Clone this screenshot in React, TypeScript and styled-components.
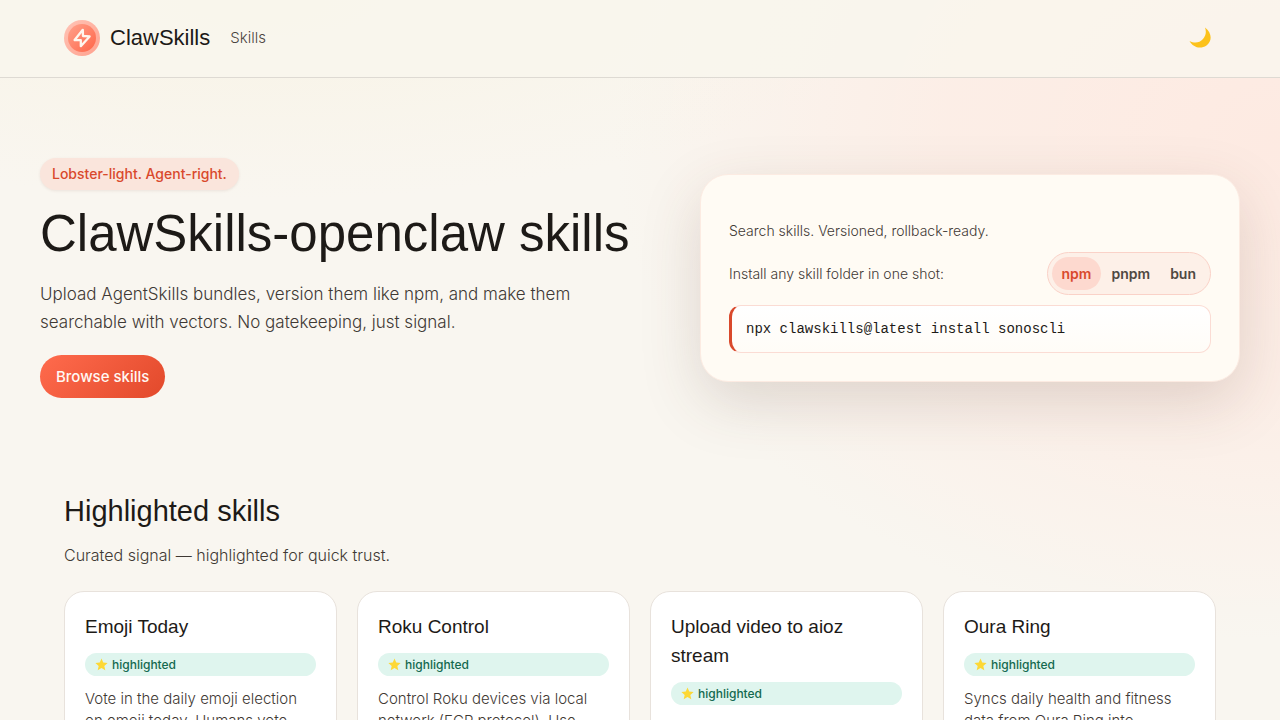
import React, { useState } from "react";
import styled, { createGlobalStyle } from "styled-components";

const display = `"Liberation Sans", sans-serif`;

const GlobalStyle = createGlobalStyle`
  * { box-sizing: border-box; }
  body {
    margin: 0;
    min-height: 100vh;
    color: #1d1a17;
    font-family: Inter, "Liberation Sans", sans-serif;
    font-size: 16px;
    font-weight: 300;
    background:
      radial-gradient(ellipse 50% 200px at 20% 0, rgba(247, 241, 220, 0.5), transparent 100%),
      radial-gradient(ellipse 52% 500px at 100% 140px, rgba(255, 230, 221, 0.75), rgba(255, 230, 221, 0.5) 50%, transparent 100%),
      #f9f6f0;
  }
  h1, h2, h3, p { margin: 0; }
  h1, h2, h3 { font-family: ${display}; font-weight: 400; }
`;

const Header = styled.header`
  border-bottom: 1px solid #dedad3;
  background: rgba(249, 246, 238, 0.8);
`;

const HeaderInner = styled.div`
  max-width: 1200px;
  margin: 0 auto;
  padding: 20px 24px 21px;
  display: flex;
  align-items: center;
  gap: 20px;
`;

const Brand = styled.a`
  display: flex;
  align-items: center;
  gap: 10px;
  color: #1d1a17;
  font-family: ${display};
  font-size: 22px;
  font-weight: 400;
  line-height: 36px;
  text-decoration: none;
`;

const NavLink = styled.a`
  color: #4a443f;
  font-size: 15px;
  line-height: 20px;
  text-decoration: none;
`;

const ThemeButton = styled.button`
  margin-left: auto;
  width: 32px;
  height: 32px;
  padding: 4px;
  border: 0;
  background: none;
  cursor: pointer;
`;

const Hero = styled.section`
  max-width: 1200px;
  margin: 0 auto;
  padding: 80px 0;
  display: grid;
  grid-template-columns: 11fr 9fr;
  align-items: center;
`;

const HeroCopy = styled.div`
  display: flex;
  flex-direction: column;
  align-items: flex-start;
`;

const Badge = styled.span`
  padding: 0 12px;
  border-radius: 16px;
  background: #fae5dc;
  box-shadow: 0 1px 3px rgba(120, 60, 40, 0.1);
  color: #d9492c;
  font-size: 14px;
  font-weight: 500;
  line-height: 32px;
`;

const HeroTitle = styled.h1`
  margin-top: 16px;
  font-size: 51px;
  line-height: 56px;
  white-space: nowrap;
`;

const HeroText = styled.p`
  max-width: 560px;
  margin-top: 18px;
  color: #3f3934;
  font-size: 17px;
  line-height: 28px;
`;

const BrowseLink = styled.a`
  margin-top: 19px;
  padding: 0 16px;
  border-radius: 22px;
  background: linear-gradient(135deg, #ff6b4d, #e2492b);
  color: #fff8f3;
  font-size: 15px;
  font-weight: 500;
  line-height: 43px;
  text-decoration: none;
`;

const InstallCard = styled.div`
  padding: 42px 28px 28px;
  border: 1px solid #fcebe2;
  border-radius: 28px;
  background: #fffbf4;
  box-shadow: 0 20px 60px rgba(90, 60, 45, 0.17);
`;

const InstallText = styled.p`
  color: #3f3934;
  font-size: 14px;
  line-height: 28px;
`;

const InstallRow = styled.div`
  margin: 7px 0 10px;
  display: flex;
  align-items: center;
  justify-content: space-between;
`;

const Switcher = styled.div`
  padding: 4px;
  display: flex;
  border: 1px solid #fad2c8;
  border-radius: 22px;
  background: #fdf0e8;
`;

const SwitchButton = styled.button<{ $active: boolean }>`
  height: 33px;
  padding: 0 10px;
  border: 0;
  border-radius: 17px;
  background: ${(p) => (p.$active ? "#fdd9cf" : "transparent")};
  color: ${(p) => (p.$active ? "#d9492c" : "#4f4842")};
  font: 600 14px Inter, "Liberation Sans", sans-serif;
  cursor: pointer;
`;

const Command = styled.code`
  display: block;
  padding: 0 14px;
  border: 1px solid #fbdcd4;
  border-left: 3px solid #d9492c;
  border-radius: 12px;
  background: linear-gradient(#ffffff, #fffcf7);
  font-family: "Liberation Mono", monospace;
  font-size: 14px;
  font-weight: 400;
  line-height: 46px;
`;

const Section = styled.section`
  max-width: 1200px;
  margin: 0 auto;
  padding: 12px 24px 48px;
`;

const SectionTitle = styled.h2`
  font-size: 29px;
  line-height: 43px;
`;

const SectionText = styled.p`
  margin: 8px 0 22px;
  color: #3f3934;
  font-size: 16px;
  line-height: 28px;
`;

const Grid = styled.div`
  display: grid;
  grid-template-columns: repeat(4, 1fr);
  gap: 20px;
`;

const Card = styled.article`
  padding: 20px;
  border: 1px solid #e8e2dc;
  border-radius: 20px;
  background: #ffffff;
`;

const CardTitle = styled.h3`
  font-size: 19px;
  line-height: 29px;
`;

const Tag = styled.div`
  margin: 12px 0;
  padding: 0 10px;
  display: flex;
  align-items: center;
  gap: 4px;
  border-radius: 12px;
  background: #dff5ee;
  color: #14694f;
  font-size: 12px;
  font-weight: 500;
  line-height: 23px;
`;

const CardText = styled.p`
  color: #3f3934;
  font-size: 15px;
  line-height: 22px;
`;

const Logo = () => (
  <svg width="36" height="36" viewBox="0 0 36 36" aria-hidden="true">
    <defs>
      <linearGradient id="logo" x1="0" y1="0" x2="1" y2="1">
        <stop offset="0" stopColor="#ffa28c" />
        <stop offset="1" stopColor="#ff6548" />
      </linearGradient>
      <linearGradient id="ring" x1="0" y1="0" x2="1" y2="1">
        <stop offset="0" stopColor="#ffc4b6" />
        <stop offset="1" stopColor="#ffa18e" />
      </linearGradient>
    </defs>
    <circle cx="18" cy="18" r="18" fill="url(#ring)" />
    <circle cx="18" cy="18" r="14" fill="url(#logo)" />
    <path d="M18.800 9.800 10.600 20 16.800 20.200 16.800 26.200 25.600 16.400 19 16z" fill="none" stroke="#fff6ee" strokeWidth="2.300" strokeLinejoin="round" />
  </svg>
);

const Moon = () => (
  <svg width="24" height="24" viewBox="0 0 24 24" aria-hidden="true">
    <path d="M17 1.500C24 7 24.500 15 18.500 19.500 12.500 23.500 5 21.500 1.500 15c5 2.500 10 2 13.500-2 3-3.500 3.500-7.500 2-11.500z" fill="#fcc21b" />
  </svg>
);

const Star = () => (
  <svg width="13" height="13" viewBox="0 0 24 24" aria-hidden="true">
    <path d="m12 1 3.200 7.500 8.100.7-6.100 5.400 1.800 8-7-4.200-7 4.200 1.800-8L.7 9.200l8.100-.7z" fill="#fdd835" />
  </svg>
);

const skills = [
  { name: "Emoji Today", text: "Vote in the daily emoji election on emoji.today. Humans vote" },
  { name: "Roku Control", text: "Control Roku devices via local network (ECP protocol). Use" },
  { name: "Upload video to aioz stream", text: "" },
  { name: "Oura Ring", text: "Syncs daily health and fitness data from Oura Ring into" },
];

const managers = [
  { name: "npm", command: "npx" },
  { name: "pnpm", command: "pnpm dlx" },
  { name: "bun", command: "bunx" },
];

export default function App() {
  const [active, setActive] = useState(0);
  return (
    <>
      <GlobalStyle />
      <Header>
        <HeaderInner>
          <Brand href="#"><Logo />ClawSkills</Brand>
          <NavLink href="#skills">Skills</NavLink>
          <ThemeButton type="button" aria-label="Toggle theme"><Moon /></ThemeButton>
        </HeaderInner>
      </Header>
      <main>
        <Hero>
          <HeroCopy>
            <Badge>Lobster-light. Agent-right.</Badge>
            <HeroTitle>ClawSkills-openclaw skills</HeroTitle>
            <HeroText>Upload AgentSkills bundles, version them like npm, and make them searchable with vectors. No gatekeeping, just signal.</HeroText>
            <BrowseLink href="#skills">Browse skills</BrowseLink>
          </HeroCopy>
          <InstallCard>
            <InstallText>Search skills. Versioned, rollback-ready.</InstallText>
            <InstallRow>
              <InstallText>Install any skill folder in one shot:</InstallText>
              <Switcher>
                {managers.map((m, i) => (
                  <SwitchButton key={m.name} type="button" $active={i === active} aria-pressed={i === active} onClick={() => setActive(i)}>
                    {m.name}
                  </SwitchButton>
                ))}
              </Switcher>
            </InstallRow>
            <Command>{managers[active].command} clawskills@latest install sonoscli</Command>
          </InstallCard>
        </Hero>
        <Section id="skills">
          <SectionTitle>Highlighted skills</SectionTitle>
          <SectionText>Curated signal — highlighted for quick trust.</SectionText>
          <Grid>
            {skills.map((s) => (
              <Card key={s.name}>
                <CardTitle>{s.name}</CardTitle>
                <Tag><Star />highlighted</Tag>
                {s.text && <CardText>{s.text}</CardText>}
              </Card>
            ))}
          </Grid>
        </Section>
      </main>
    </>
  );
}
